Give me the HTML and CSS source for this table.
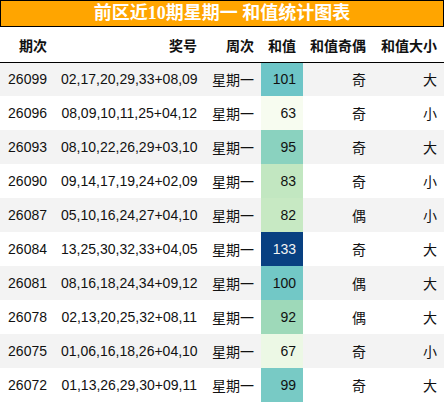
FILE: index.html
```html
<!DOCTYPE html>
<html lang="zh">
<head>
<meta charset="utf-8">
<link rel="stylesheet" href="styles.css">
</head>
<body>
<div class="wrap">
  <div class="title">前区近10期星期一 和值统计图表</div>
  <table class="stats">
    <colgroup>
      <col class="c1"><col class="c2"><col class="c3"><col class="c4"><col class="c5"><col class="c6">
    </colgroup>
    <thead>
      <tr><th>期次</th><th>奖号</th><th>周次</th><th>和值</th><th>和值奇偶</th><th>和值大小</th></tr>
    </thead>
    <tbody>
      <tr><td>26099</td><td>02,17,20,29,33+08,09</td><td>星期一</td><td class="sum" style="background:#6dc5c7">101</td><td>奇</td><td>大</td></tr>
      <tr><td>26096</td><td>08,09,10,11,25+04,12</td><td>星期一</td><td class="sum" style="background:#f7fcf0">63</td><td>奇</td><td>小</td></tr>
      <tr><td>26093</td><td>08,10,22,26,29+03,10</td><td>星期一</td><td class="sum" style="background:#8ad2bf">95</td><td>奇</td><td>大</td></tr>
      <tr><td>26090</td><td>09,14,17,19,24+02,09</td><td>星期一</td><td class="sum" style="background:#c2e7c1">83</td><td>奇</td><td>小</td></tr>
      <tr><td>26087</td><td>05,10,16,24,27+04,10</td><td>星期一</td><td class="sum" style="background:#c7e9c3">82</td><td>偶</td><td>小</td></tr>
      <tr><td>26084</td><td>13,25,30,32,33+04,05</td><td>星期一</td><td class="sum light" style="background:#084081">133</td><td>奇</td><td>大</td></tr>
      <tr><td>26081</td><td>08,16,18,24,34+09,12</td><td>星期一</td><td class="sum" style="background:#72c8c6">100</td><td>偶</td><td>大</td></tr>
      <tr><td>26078</td><td>02,13,20,25,32+08,11</td><td>星期一</td><td class="sum" style="background:#9ed9b9">92</td><td>偶</td><td>大</td></tr>
      <tr><td>26075</td><td>01,06,16,18,26+04,10</td><td>星期一</td><td class="sum" style="background:#ecf8e5">67</td><td>奇</td><td>小</td></tr>
      <tr><td>26072</td><td>01,13,26,29,30+09,11</td><td>星期一</td><td class="sum" style="background:#78cac5">99</td><td>奇</td><td>大</td></tr>
    </tbody>
  </table>
</div>
</body>
</html>
```
FILE: styles.css
```css
html, body {
  margin: 0;
  padding: 0;
  background: #fff;
}

.wrap {
  width: 444px;
}

.title {
  box-sizing: border-box;
  height: 27px;
  border: 1px solid #000;
  background: #ffa500;
  color: #fff;
  font-family: "Liberation Serif", "Noto Sans CJK SC", serif;
  font-weight: bold;
  font-size: 18px;
  line-height: 25px;
  text-align: center;
}

.stats {
  width: 444px;
  border-collapse: collapse;
  table-layout: fixed;
  font-family: "Liberation Sans", "Noto Sans CJK SC", sans-serif;
  font-size: 14px;
  color: #111;
}

.c1 { width: 54px; }
.c2 { width: 150px; }
.c3 { width: 57px; }
.c4 { width: 42px; }
.c5 { width: 70px; }
.c6 { width: 71px; }

.stats th,
.stats td {
  padding: 0 7px;
  text-align: right;
  white-space: nowrap;
  overflow: visible;
}

.stats th {
  height: 35px;
  padding-top: 2px;
  box-sizing: border-box;
  font-weight: bold;
  border-bottom: 1px solid #000;
}

.stats td {
  height: 34px;
  box-sizing: border-box;
}

.stats tbody tr:nth-child(odd) {
  background: #f3f3f3;
}

.stats td.light {
  color: #f4f4f4;
}
```
